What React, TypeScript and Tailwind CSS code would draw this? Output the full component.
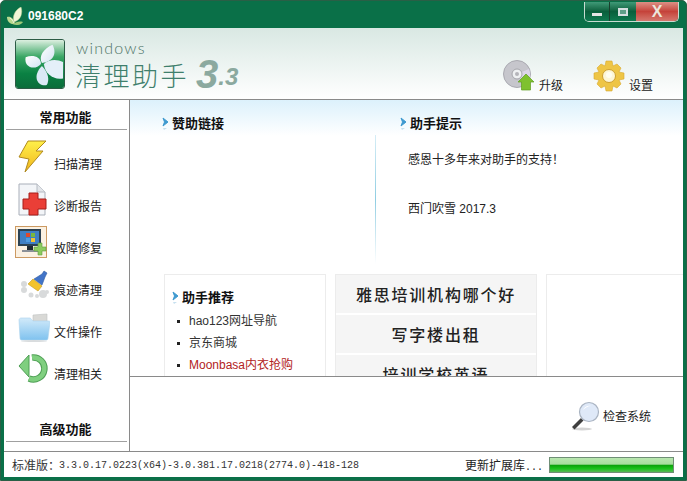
import React from "react";

const cjk = "font-['Noto_Sans_CJK_SC',sans-serif]";

const Leaf = () => (
  <svg width="18" height="18" viewBox="0 0 18 18">
    <path d="M1 10c3-1 7 1 8 7-4 1-8-2-8-7z" fill="#b8d98f" />
    <path d="M8 15C6 9 9 3 15 0c2 6 0 13-7 15z" fill="#f2f6d8" stroke="#b9d38e" strokeWidth="0.5" />
    <path d="M7 17c3-2 6-3 10-2-2 3-6 4-10 2z" fill="#9cc878" />
    <path d="M4 11c2 1 3 3 4 5" stroke="#f2f7df" strokeWidth="1" fill="none" />
  </svg>
);

const Flower = () => (
  <svg width="50" height="50" viewBox="0 0 50 50" className="rounded-[3px] border border-[#2c5b45]">
    <defs>
      <linearGradient id="fg" x1="0" y1="0" x2="0" y2="1">
        <stop offset="0" stopColor="#dcefe0" />
        <stop offset="0.35" stopColor="#3aa765" />
        <stop offset="0.7" stopColor="#0a8143" />
        <stop offset="1" stopColor="#0b6d3b" />
      </linearGradient>
      <linearGradient id="pt" x1="0" y1="0" x2="1" y2="1">
        <stop offset="0" stopColor="#ffffff" />
        <stop offset="1" stopColor="#d4e4f4" />
      </linearGradient>
    </defs>
    <rect width="50" height="50" fill="url(#fg)" />
    <path d="M27 24C23 17 29 9 38 5c4 7 3 17-11 19z" fill="url(#pt)" />
    <path d="M26 25C20 32 8 29 10 18c7-3 16-1 16 7z" fill="url(#pt)" />
    <path d="M27 27c7 7 8 15 5 20-9 2-16-9-5-20z" fill="#dbe9f6" />
    <path d="M29 25c5-5 14-5 20-2v17c-10 2-19-5-20-15z" fill="#e4eff9" />
  </svg>
);

const Disc = () => (
  <svg width="32" height="32" viewBox="0 0 32 32">
    <circle cx="14" cy="14" r="13.500" fill="#c6c6cc" stroke="#a9a9b0" />
    <path d="M14 14L26 9A13 13 0 0 1 22 25z" fill="#dcd6ea" />
    <circle cx="14" cy="14" r="5" fill="#eef0f2" stroke="#a5a5ab" />
    <circle cx="14" cy="14" r="2" fill="#b4b4ba" />
    <path d="M23 14l8 8h-3.500v8h-9v-8H15z" fill="#7fc12f" stroke="#5f9e20" strokeWidth="0.7" />
  </svg>
);

const Gear = () => (
  <svg width="32" height="32" viewBox="0 0 32 32">
    <g fill="#eec545" stroke="#d9a92f" strokeWidth="0.6">
      <path d="M13 1h6l1 5 4-2 4 4-2 4 5 1v6l-5 1 2 4-4 4-4-2-1 5h-6l-1-5-4 2-4-4 2-4-5-1v-6l5-1-2-4 4-4 4 2z" />
    </g>
    <circle cx="16" cy="16" r="6.500" fill="#fdf6d6" stroke="#cd9f2e" />
    <circle cx="16" cy="15" r="3" fill="#fffdf0" />
  </svg>
);

const Bolt = () => (
  <svg width="30" height="34" viewBox="0 0 30 34">
    <defs>
      <linearGradient id="bg" x1="0" y1="0" x2="0" y2="1">
        <stop offset="0" stopColor="#fff04a" />
        <stop offset="1" stopColor="#f1b51c" />
      </linearGradient>
    </defs>
    <path d="M10 1h18L18 11h7L7 32l4-13-10-2z" fill="url(#bg)" stroke="#b08a20" strokeWidth="1" />
  </svg>
);

const DocCross = () => (
  <svg width="32" height="33" viewBox="0 0 32 33">
    <path d="M1 1h18l8 8v23H1z" fill="#f3f5f8" stroke="#a9afb9" />
    <path d="M19 1v8h8" fill="#e3e6ea" stroke="#b5bac2" />
    <path d="M11 10h9v6h8v10h-8v6h-9v-6H5V16h6z" fill="#ea3f37" stroke="#a61e1b" />
  </svg>
);

const Monitor = () => (
  <svg width="32" height="32" viewBox="0 0 32 32">
    <rect x="0.500" y="0.500" width="31" height="31" fill="#fbf1e2" stroke="#cc9a62" />
    <rect x="3" y="3" width="23" height="17" fill="#2d4252" />
    <rect x="5" y="5" width="19" height="13" fill="#3f7fc4" />
    <rect x="11" y="7" width="4" height="4" fill="#e0492e" />
    <rect x="16" y="7" width="4" height="4" fill="#79b73c" />
    <rect x="11" y="12" width="4" height="4" fill="#4f9be0" />
    <rect x="16" y="12" width="4" height="4" fill="#f2c230" />
    <rect x="12" y="20" width="6" height="4" fill="#1f2a33" />
    <rect x="7" y="24" width="16" height="2" fill="#8a9097" />
    <path d="M23 17h4v4h4v4h-4v4h-4v-4h-4v-4h4z" fill="#8ccb5f" stroke="#5e9d3e" strokeWidth="0.6" />
  </svg>
);

const Broom = () => (
  <svg width="32" height="30" viewBox="0 0 32 30">
    <g fill="#d8dadb">
      <circle cx="6" cy="14" r="3" />
      <circle cx="6" cy="20" r="3" />
      <circle cx="13" cy="25" r="2.500" />
      <circle cx="25" cy="24" r="4" />
      <circle cx="19" cy="26" r="2" />
      <circle cx="29" cy="22" r="2" />
    </g>
    <path d="M15 9l9 7-4 5-10-7z" fill="#f2c32c" stroke="#c59a25" strokeWidth="0.6" />
    <path d="M16 9l8-5 2-3 3 2-2 4-3 8z" fill="#4274c8" stroke="#2f5b9e" strokeWidth="0.6" />
  </svg>
);

const Folder = () => (
  <svg width="32" height="30" viewBox="0 0 32 30">
    <defs>
      <linearGradient id="fo" x1="0" y1="0" x2="0" y2="1">
        <stop offset="0" stopColor="#d2eafa" />
        <stop offset="1" stopColor="#7fc2ef" />
      </linearGradient>
    </defs>
    <path d="M15 3l14-1v12H15z" fill="#d9d9d6" stroke="#bfc2c2" strokeWidth="0.6" />
    <path d="M1 8c0-1 1-2 2-2h9c1 0 1 2 3 3h15c1 0 2 0 2 1l-2 16c0 2-1 2-3 2H5c-2 0-3 0-3-2z" fill="url(#fo)" stroke="#a9d2ec" strokeWidth="0.6" />
    <ellipse cx="16" cy="29" rx="13" ry="1" fill="#d9dcde" />
  </svg>
);

const Refresh = () => (
  <svg width="32" height="30" viewBox="0 0 32 30">
    <path d="M14 3.500A11 11 0 1 1 11 24.500" fill="none" stroke="#4f9f55" strokeWidth="6.500" />
    <path d="M14 3.500A11 11 0 1 1 11 24.500" fill="none" stroke="#7fcf7f" strokeWidth="4.500" />
    <path d="M11 1v22L1 12z" fill="#7fcf7f" stroke="#4f9f55" strokeWidth="1" strokeLinejoin="round" />
  </svg>
);

const Magnifier = () => (
  <svg width="30" height="30" viewBox="0 0 30 30">
    <ellipse cx="11" cy="28" rx="10" ry="1.500" fill="#d4d4d4" />
    <path d="M1 26l9-9 2.500 2.500-9 9z" fill="#3f3f3f" />
    <circle cx="18" cy="11" r="9.500" fill="#dfe9f8" stroke="#aab4c2" strokeWidth="1.200" />
    <path d="M12 9c1-3 5-5 8-4-3 0-6 2-8 4z" fill="#fff" />
  </svg>
);

const Chevron = () => (
  <svg width="8" height="13" viewBox="0 0 8 13" className="shrink-0">
    <path d="M1 1l5 4-5 4 1.500-4z" fill="#3f9ad0" stroke="#3f9ad0" strokeWidth="1" />
    <path d="M1 11h4l-3 2z" fill="#c6e0ef" />
  </svg>
);

const NavItem = ({ icon, label, wide }: { icon: React.ReactNode; label: string; wide?: boolean }) => (
  <div className="flex h-[42px] items-end">
    <div className={wide ? "-ml-[1px] w-[39px] shrink-0" : "w-[38px] shrink-0 pl-[2px]"}>{icon}</div>
    <span className={`${cjk} mb-[3px] text-[12px] leading-[14px] text-[#222]`}>{label}</span>
  </div>
);

const SectionTitle = ({ children }: { children: React.ReactNode }) => (
  <div className="flex items-center gap-[2px]">
    <Chevron />
    <span className={`${cjk} text-[13px] font-bold leading-[16px] text-[#111]`}>{children}</span>
  </div>
);

const AdRow = ({ children }: { children: React.ReactNode }) => (
  <div className={`${cjk} flex h-[40px] items-center justify-center border-b-2 border-white bg-[#f5f5f5] text-[16px] font-medium tracking-[1.8px] text-[#222]`}>
    {children}
  </div>
);

const LinkRow = ({ children, red }: { children: React.ReactNode; red?: boolean }) => (
  <li className={`flex h-[22px] items-center gap-[9px] font-['Liberation_Sans','Noto_Sans_CJK_SC',sans-serif] text-[12px] ${red ? "text-[#b22222]" : "text-[#333]"}`}>
    <span className="h-[3px] w-[3px] bg-[#222]" />
    {children}
  </li>
);

export default function App() {
  return (
    <div className="flex h-[481px] w-[687px] flex-col overflow-hidden rounded-t-[5px] border border-[#2a5f46] bg-[#0a7048]">
      {/* title bar */}
      <div className="flex h-[27px] shrink-0 items-start justify-between pl-[5px] pr-[7px]">
        <div className="flex h-[30px] items-center gap-[4px]">
          <Leaf />
          <span className="font-['Liberation_Sans',sans-serif] text-[12px] font-bold text-white">091680C2</span>
        </div>
        <div className="mt-[1px] flex h-[20px] overflow-hidden rounded-b-[5px] border border-t-0 border-[#c8dcd2]">
          <div className="flex w-[25px] items-center justify-center border-r border-[#1a3f2d] bg-gradient-to-b from-[#3f9a78] via-[#0a5f3c] to-[#0f7a50]">
            <span className="mt-[5px] h-[3px] w-[10px] bg-[#e4e4e4]" />
          </div>
          <div className="flex w-[26px] items-center justify-center bg-gradient-to-b from-[#3f9a78] via-[#0a5f3c] to-[#0f7a50]">
            <span className="h-[8px] w-[10px] border-2 border-[#d6dfe0] bg-[#5f9f88]" />
          </div>
          <div className="flex w-[42px] items-center justify-center bg-gradient-to-b from-[#dc8f85] via-[#c5423a] to-[#d4776e]">
            <span className="font-['Liberation_Sans',sans-serif] text-[16px] font-bold leading-none text-[#ece6dc]">X</span>
          </div>
        </div>
      </div>

      <div className="mx-[3px] mb-[3px] flex min-h-0 flex-1 flex-col bg-white">
        {/* header */}
        <div className="flex h-[72px] shrink-0 items-start justify-between border-b border-[#8a8a8a] bg-gradient-to-b from-[#d9e8e3] to-[#ffffff] pl-[11px] pr-[30px]">
          <div className="flex items-start pt-[11px]">
            <Flower />
            <div className="ml-[11px] mt-[1px]">
              <div className="font-['Lato',sans-serif] text-[16px] font-light leading-[16px] tracking-[1.2px] text-[#4f7568]">windows</div>
              <div className="-ml-[1px] flex items-end">
                <span className={`${cjk} text-[26px] font-light leading-[34px] tracking-[2.500px] text-[#3f7f6c]`}>清理助手</span>
                <span className="ml-[7px] font-['Liberation_Sans',sans-serif] text-[40px] font-bold italic leading-[36px] text-[#8ba99f]">3</span>
                <span className="font-['Liberation_Sans',sans-serif] text-[24px] font-bold italic leading-[30px] text-[#8ba99f]">.3</span>
              </div>
            </div>
          </div>
          <div className="flex items-start gap-[30px] pt-[32px]">
            <div className="flex items-end gap-[4px]">
              <Disc />
              <span className={`${cjk} text-[12px] leading-[14px] text-[#222]`}>升级</span>
            </div>
            <div className="flex items-end gap-[4px]">
              <Gear />
              <span className={`${cjk} text-[12px] leading-[14px] text-[#222]`}>设置</span>
            </div>
          </div>
        </div>

        {/* body */}
        <div className="flex min-h-0 flex-1">
          <aside className="flex w-[126px] shrink-0 flex-col border-r border-[#8a8a8a] px-[2px]">
            <div className={`${cjk} mt-[8px] border-b border-[#a0a0a0] pb-[3px] pr-[2px] text-center text-[13px] font-bold leading-[18px] text-[#111]`}>常用功能</div>
            <div className="flex flex-col pl-[10px] pt-[2px]">
              <NavItem icon={<Bolt />} label="扫描清理" />
              <NavItem icon={<DocCross />} label="诊断报告" />
              <NavItem icon={<Monitor />} label="故障修复" wide />
              <NavItem icon={<Broom />} label="痕迹清理" />
              <NavItem icon={<Folder />} label="文件操作" />
              <NavItem icon={<Refresh />} label="清理相关" />
            </div>
            <div className={`${cjk} mb-[9px] mt-auto border-b border-[#a0a0a0] pb-[3px] pr-[2px] text-center text-[13px] font-bold leading-[18px] text-[#111]`}>高级功能</div>
          </aside>

          <div className="flex min-w-0 flex-1 flex-col">
            {/* scroll area */}
            <div className="h-[277px] shrink-0 overflow-hidden border-b border-[#8a8a8a] bg-[linear-gradient(to_bottom,#dcf1fc_0px,#ffffff_36px)]">
              <div className="flex h-[174px]">
                <div className="w-[245px] shrink-0 pl-[32px] pt-[15px]">
                  <SectionTitle>赞助链接</SectionTitle>
                </div>
                <div className="mt-[35px] h-[129px] w-[1px] shrink-0 bg-gradient-to-b from-[#d6edf6] via-[#8fcde2] to-[#ffffff]" />
                <div className="pl-[24px] pt-[15px]">
                  <SectionTitle>助手提示</SectionTitle>
                  <div className="mt-[22px] pl-[8px] font-['Liberation_Sans','Noto_Sans_CJK_SC',sans-serif] text-[12px] leading-[14px] text-[#222]">感恩十多年来对助手的支持！</div>
                  <div className="mt-[35px] pl-[8px] font-['Liberation_Sans','Noto_Sans_CJK_SC',sans-serif] text-[12px] leading-[14px] text-[#222]">西门吹雪 2017.3</div>
                </div>
              </div>
              <div className="flex gap-[9px] pl-[34px]">
                <div className="h-[110px] w-[162px] shrink-0 border border-[#ececec] pl-[7px] pt-[14px]">
                  <SectionTitle>助手推荐</SectionTitle>
                  <ul className="mt-[5px] pl-[5px]">
                    <LinkRow>hao123网址导航</LinkRow>
                    <LinkRow>京东商城</LinkRow>
                    <LinkRow red>Moonbasa内衣抢购</LinkRow>
                  </ul>
                </div>
                <div className="h-[110px] w-[202px] shrink-0 border border-[#ececec]">
                  <AdRow>雅思培训机构哪个好</AdRow>
                  <AdRow>写字楼出租</AdRow>
                  <AdRow>培训学校英语</AdRow>
                </div>
                <div className="h-[110px] flex-1 border border-r-0 border-[#ececec]" />
              </div>
            </div>
            {/* bottom bar */}
            <div className="flex flex-1 items-start justify-end pr-[32px] pt-[24px]">
              <div className="flex items-center gap-[2px]">
                <Magnifier />
                <span className={`${cjk} text-[12px] leading-[14px] text-[#222]`}>检查系统</span>
              </div>
            </div>
          </div>
        </div>

        {/* status bar */}
        <div className="flex h-[26px] shrink-0 items-center justify-between border-t border-[#8a8a8a] pl-[8px] pr-[9px] pt-[1px]">
          <div className="flex items-center font-['Liberation_Mono','Noto_Sans_CJK_SC',monospace] text-[10px] text-[#333]">
            <span className={`${cjk} text-[12px]`}>标准版：</span>
            <span className="ml-[-1px]">3.3.0.17.0223(x64)-3.0.381.17.0218(2774.0)-418-128</span>
          </div>
          <div className="flex items-center gap-[6px]">
            <span className={`${cjk} text-[12px] text-[#222]`}>
              更新扩展库<span className="font-['Liberation_Mono',monospace] text-[10px]">...</span>
            </span>
            <div className="h-[16px] w-[125px] border border-[#6f8f76] bg-[linear-gradient(to_bottom,#b9e6b0_0%,#a6dd9d_45%,#0a9f0a_50%,#19c11a_75%,#56b956_100%)]" />
          </div>
        </div>
      </div>
    </div>
  );
}
